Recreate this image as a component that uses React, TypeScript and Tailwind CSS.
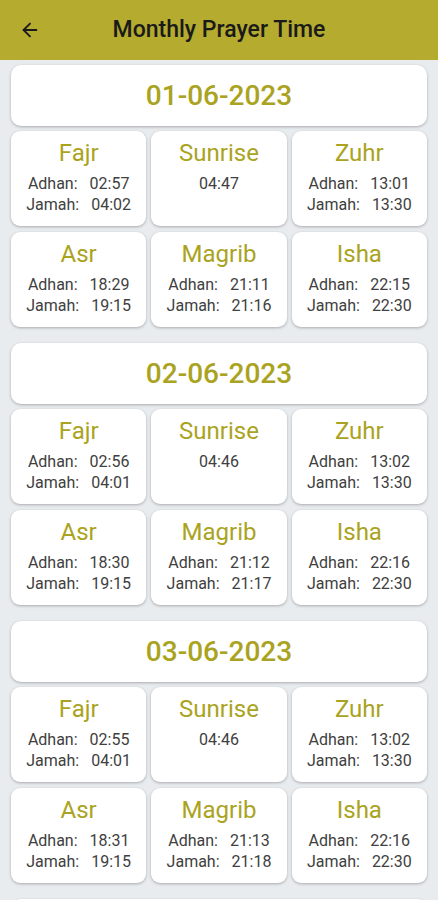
import { ArrowLeft } from 'lucide-react';

interface Prayer {
  name: string;
  adhan?: string;
  jamah?: string;
  time?: string;
}

interface Day {
  date: string;
  prayers: Prayer[];
}

const DAYS: Day[] = [
  {
    date: '01-06-2023',
    prayers: [
      { name: 'Fajr', adhan: '02:57', jamah: '04:02' },
      { name: 'Sunrise', time: '04:47' },
      { name: 'Zuhr', adhan: '13:01', jamah: '13:30' },
      { name: 'Asr', adhan: '18:29', jamah: '19:15' },
      { name: 'Magrib', adhan: '21:11', jamah: '21:16' },
      { name: 'Isha', adhan: '22:15', jamah: '22:30' },
    ],
  },
  {
    date: '02-06-2023',
    prayers: [
      { name: 'Fajr', adhan: '02:56', jamah: '04:01' },
      { name: 'Sunrise', time: '04:46' },
      { name: 'Zuhr', adhan: '13:02', jamah: '13:30' },
      { name: 'Asr', adhan: '18:30', jamah: '19:15' },
      { name: 'Magrib', adhan: '21:12', jamah: '21:17' },
      { name: 'Isha', adhan: '22:16', jamah: '22:30' },
    ],
  },
  {
    date: '03-06-2023',
    prayers: [
      { name: 'Fajr', adhan: '02:55', jamah: '04:01' },
      { name: 'Sunrise', time: '04:46' },
      { name: 'Zuhr', adhan: '13:02', jamah: '13:30' },
      { name: 'Asr', adhan: '18:31', jamah: '19:15' },
      { name: 'Magrib', adhan: '21:13', jamah: '21:18' },
      { name: 'Isha', adhan: '22:16', jamah: '22:30' },
    ],
  },
  {
    date: '04-06-2023',
    prayers: [
      { name: 'Fajr', adhan: '02:55', jamah: '04:00' },
      { name: 'Sunrise', time: '04:45' },
      { name: 'Zuhr', adhan: '13:02', jamah: '13:30' },
      { name: 'Asr', adhan: '18:32', jamah: '19:15' },
      { name: 'Magrib', adhan: '21:14', jamah: '21:19' },
      { name: 'Isha', adhan: '22:17', jamah: '22:30' },
    ],
  },
];

function PrayerCard({ prayer }: { prayer: Prayer }) {
  return (
    <div className="h-[95px] bg-white rounded-[9px] shadow-[0_1px_3px_rgba(0,0,0,0.28)] flex flex-col items-center pt-[8px]">
      <div className="text-[24px] leading-[28px] text-[#aaa321]">{prayer.name}</div>
      <div className="mt-[6px] text-[16px] leading-[21px] text-[#404040]">
        {prayer.time ? (
          <div>{prayer.time}</div>
        ) : (
          <>
            <div className="flex justify-center gap-[12px]">
              <span>Adhan:</span>
              <span>{prayer.adhan}</span>
            </div>
            <div className="flex justify-center gap-[12px]">
              <span>Jamah:</span>
              <span>{prayer.jamah}</span>
            </div>
          </>
        )}
      </div>
    </div>
  );
}

export default function App() {
  return (
    <div className="w-[438px] h-[900px] overflow-hidden bg-[#e9ecef] font-['Roboto',sans-serif]">
      {/* App bar */}
      <div className="h-[60px] bg-[#b5ab2f] flex items-center relative">
        <ArrowLeft className="w-[22px] h-[22px] ml-[19px] text-[#1a1a1a]" strokeWidth={2} />
        <div className="absolute inset-0 flex items-center justify-center text-[23px] font-medium text-[#1a1a1a]">
          Monthly Prayer Time
        </div>
      </div>

      <div className="px-[11px] pt-[5px] flex flex-col gap-[16px]">
        {DAYS.map((day) => (
          <div key={day.date} className="flex flex-col gap-[5px]">
            <div className="h-[61px] bg-white rounded-[10px] shadow-[0_1px_3px_rgba(0,0,0,0.28)] flex items-center justify-center">
              <span className="text-[28px] font-medium text-[#aaa321]">{day.date}</span>
            </div>
            <div className="grid grid-cols-3 gap-x-[5px] gap-y-[6px]">
              {day.prayers.map((p) => (
                <PrayerCard key={p.name} prayer={p} />
              ))}
            </div>
          </div>
        ))}
      </div>
    </div>
  );
}
